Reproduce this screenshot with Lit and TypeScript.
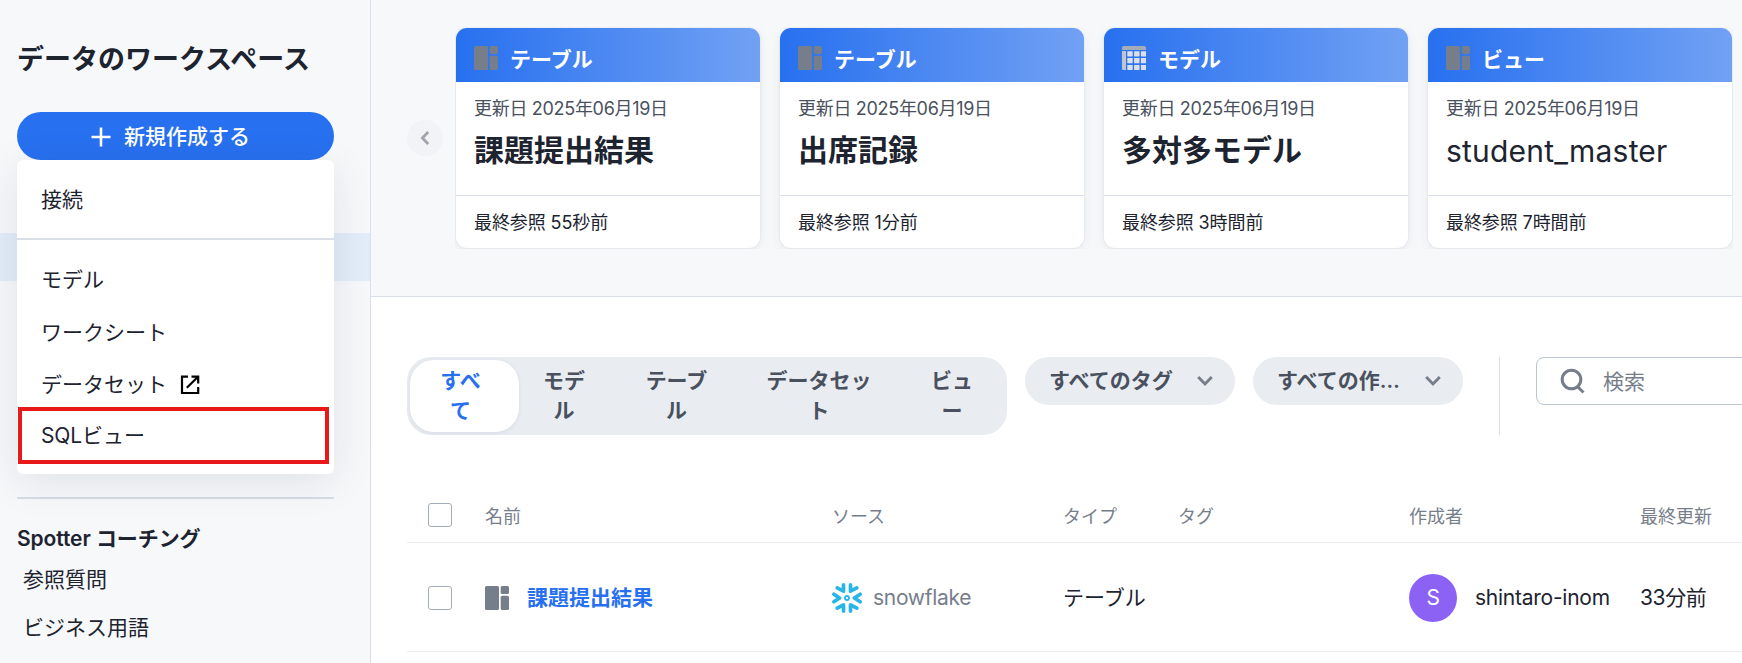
import { LitElement, html, css, svg } from 'lit';
import { customElement, property } from 'lit/decorators.js';
import { classMap } from 'lit/directives/class-map.js';

type IconName = 'plus' | 'external' | 'table' | 'model' | 'chevron-left' | 'chevron-down' | 'search' | 'snowflake';

const icons = {
  plus: { size: 20, body: svg`<path d="M10 .5v19M.5 10h19" stroke="currentColor" stroke-width="2.6" />` },
  external: {
    size: 20,
    body: svg`<g fill="none" stroke="currentColor" stroke-width="2.2">
      <path d="M8 1.6H2V18h16.2v-6M11.5 1.6h6.7v6.9M18 1.8L6.8 12.8" />
    </g>`,
  },
  table: {
    size: 24,
    body: svg`<g fill="#777e8b">
      <rect width="14" height="24" rx="1.5" />
      <rect x="15.7" width="8.3" height="8" rx="1.5" />
      <rect x="15.7" y="9.8" width="8.3" height="14.2" rx="1.5" />
    </g>`,
  },
  model: {
    size: 24,
    body: svg`
      <path d="M1.5 0h21A1.5 1.5 0 0 1 24 1.5V4H0V1.5A1.5 1.5 0 0 1 1.5 0z" fill="#a5acb9" />
      <path d="M0 5h4v19H1.5A1.5 1.5 0 0 1 0 22.5z" fill="#c0c6cf" />
      <g fill="#dbdfe7">
        ${[5.3, 12.1, 18.9].map(x => [5.3, 12.1, 18.9].map(y => svg`
          <rect x=${x} y=${y} width="5.4" height="5.1" rx="0.4" />
        `))}
      </g>`,
  },
  'chevron-left': {
    size: 14,
    body: svg`<path d="M10.2 1L4.4 7l5.8 6" fill="none" stroke="currentColor" stroke-width="2.8" />`,
  },
  'chevron-down': {
    size: 16,
    body: svg`<path d="M1.2 4L8 11l6.8-7" fill="none" stroke="currentColor" stroke-width="2.9" />`,
  },
  search: {
    size: 26,
    body: svg`<g fill="none" stroke="currentColor" stroke-width="3">
      <circle cx="11.5" cy="11.5" r="9.3" />
      <path d="M17.7 18.7l5.8 5.8" />
    </g>`,
  },
  snowflake: {
    size: 30,
    body: svg`<g fill="none" stroke="#29b5e8" stroke-width="3.7" stroke-linecap="round" stroke-linejoin="round">
      <path d="M11.5 1.9v6.3L5.2 4.9M18.5 1.9v6.3l6.3-3.3" />
      <path d="M11.5 28.1v-6.3l-6.3 3.3M18.5 28.1v-6.3l6.3 3.3" />
      <path d="M1.9 11.3L7.6 15l-5.7 3.7M28.1 11.3L22.4 15l5.7 3.7" />
      <circle cx="15" cy="15" r="2" stroke-width="1.8" />
    </g>`,
  },
};

@customElement('ws-icon')
export class WsIcon extends LitElement {
  static styles = css`
    :host {
      display: inline-flex;
      flex: none;
    }

    svg {
      display: block;
    }
  `;

  @property({ type: String })
  name: IconName = 'plus';

  render() {
    const { size, body } = icons[this.name];
    return html`<svg width=${size} height=${size} viewBox="0 0 ${size} ${size}" aria-hidden="true">${body}</svg>`;
  }
}

@customElement('ws-card')
export class WsCard extends LitElement {
  static styles = css`
    :host {
      display: flex;
      flex-direction: column;
      flex: none;
      width: 304px;
      height: 220px;
      border-radius: 11px;
      overflow: hidden;
      background: #fff;
      box-shadow: 0 0 2px rgba(25, 35, 49, 0.1), 0 3px 12px rgba(25, 35, 49, 0.07);
    }

    header {
      display: flex;
      align-items: center;
      gap: 12px;
      height: 54px;
      padding: 0 18px;
      box-sizing: border-box;
      background: linear-gradient(90deg, #2770ef, #71a1f4);
      color: #fff;
      font-weight: 700;
      line-height: 30px;
    }

    ws-icon {
      padding-top: 6px;
    }

    header span {
      padding-top: 10px;
    }

    .body {
      flex: 1;
      padding: 13px 18px 0;
    }

    .date {
      color: #4a515e;
      font-size: 18px;
      line-height: 28px;
      letter-spacing: -0.3px;
    }

    .name {
      margin-top: 5px;
      font-size: 30px;
      font-weight: 700;
      line-height: 45px;
    }

    .name.latin {
      padding-top: 1px;
      font-weight: 400;
      letter-spacing: 0.2px;
    }

    footer {
      box-sizing: border-box;
      height: 53px;
      padding: 1px 18px 0;
      border-top: 1px solid #d9dee8;
      font-size: 18px;
      line-height: 52px;
      letter-spacing: -0.1px;
    }
  `;

  @property({ type: String }) kind = '';
  @property({ type: String }) icon: IconName = 'table';
  @property({ type: String }) name = '';
  @property({ type: String }) viewed = '';

  render() {
    const latin = /^[\x20-\x7e]+$/.test(this.name);
    return html`
      <header><ws-icon name=${this.icon}></ws-icon><span>${this.kind}</span></header>
      <div class="body">
        <div class="date">更新日 2025年06月19日</div>
        <div class=${classMap({ name: true, latin })}>${this.name}</div>
      </div>
      <footer>最終参照 ${this.viewed}</footer>
    `;
  }
}

const cards: { kind: string; icon: IconName; name: string; viewed: string }[] = [
  { kind: 'テーブル', icon: 'table', name: '課題提出結果', viewed: '55秒前' },
  { kind: 'テーブル', icon: 'table', name: '出席記録', viewed: '1分前' },
  { kind: 'モデル', icon: 'model', name: '多対多モデル', viewed: '3時間前' },
  { kind: 'ビュー', icon: 'table', name: 'student_master', viewed: '7時間前' },
];

const tabs = [
  ['すべ', 'て'],
  ['モデ', 'ル'],
  ['テーブ', 'ル'],
  ['データセッ', 'ト'],
  ['ビュ', 'ー'],
];

@customElement('app-root')
export class AppRoot extends LitElement {
  static styles = css`
    :host {
      display: flex;
      width: 1742px;
      height: 663px;
      overflow: hidden;
      background: #fff;
      color: #1d232f;
      font-family: Inter, 'Noto Sans CJK JP', sans-serif;
      font-size: 21px;
      line-height: 30px;
      white-space: nowrap;
    }

    /* Sidebar */
    aside {
      flex: none;
      position: relative;
      display: flex;
      flex-direction: column;
      width: 370px;
      border-right: 1px solid #d9dee8;
      background: #f6f8fa;
      overflow: hidden;
    }

    h1 {
      margin: 40px 17px 32px;
      font-size: 27px;
      font-weight: 700;
      line-height: 40px;
    }

    .create {
      display: flex;
      align-items: center;
      justify-content: center;
      gap: 13px;
      width: 317px;
      height: 48px;
      margin-left: 17px;
      padding: 1px 10px 0 0;
      border: 0;
      border-radius: 24px;
      background: #2770ef;
      color: #fff;
      font: inherit;
      font-weight: 500;
    }

    .selected {
      height: 48px;
      margin-top: 73px;
      background: #e3ecf9;
    }

    .rule {
      height: 2px;
      margin: 216px 36px 0 17px;
      background: #d6dce6;
    }

    h2 {
      margin: 25px 17px 0;
      font-size: 21px;
      font-weight: 600;
      line-height: 30px;
      letter-spacing: -0.08px;
    }

    .link {
      margin: 11px 23px 0;
      font-weight: 400;
      line-height: 30px;
    }

    .link + .link {
      margin-top: 18px;
    }

    .menu {
      position: absolute;
      top: 160px;
      left: 17px;
      width: 317px;
      height: 314px;
      border-radius: 6px;
      background: #fff;
      box-shadow: 0 8px 40px rgba(25, 35, 49, 0.1);
    }

    .menu div {
      display: flex;
      align-items: center;
      box-sizing: border-box;
      height: 52px;
      padding-left: 24px;
    }

    .menu .first {
      height: 80px;
      padding-top: 1px;
      border-bottom: 2px solid #d9dee8;
    }

    .menu .model {
      height: 54px;
      margin-top: 13px;
    }

    .menu ws-icon {
      margin-left: 13px;
      color: #000;
    }

    .menu .boxed {
      width: 311px;
      height: 57px;
      margin: -4px 0 0 1px;
      padding-left: 19px;
      border: 4px solid #e81919;
      letter-spacing: -0.1px;
    }

    /* Recent items */
    main {
      flex: 1;
      min-width: 0;
    }

    .recent {
      display: flex;
      align-items: center;
      box-sizing: border-box;
      height: 297px;
      padding: 0 0 20px 36px;
      border-bottom: 1px solid #d9dee8;
      background: #f6f8fa;
    }

    .prev {
      display: flex;
      flex: none;
      align-items: center;
      justify-content: center;
      width: 36px;
      height: 36px;
      border-radius: 50%;
      background: #f1f3f6;
      color: #a1a5ad;
    }

    .cards {
      display: flex;
      gap: 20px;
      margin-left: 12px;
      padding: 1px;
      overflow: hidden;
    }

    /* Filters */
    .filters {
      display: flex;
      align-items: flex-start;
      margin: 60px 0 0 36px;
    }

    .tabs {
      display: grid;
      flex: none;
      grid-template-columns: 109px 90px 135px 150px 110px;
      padding: 3px;
      border-radius: 24px;
      background: #e9ecf1;
      color: #4a515e;
      font-weight: 600;
      text-align: center;
    }

    .tab {
      padding: 6px 0;
      border-radius: 24px;
    }

    .tab:last-child {
      padding-left: 6px;
    }

    .tab.active {
      padding-right: 8px;
      background: #fff;
      color: #2770ef;
      box-shadow: 0 1px 5px rgba(25, 35, 49, 0.08);
    }

    .chip {
      display: flex;
      flex: none;
      align-items: center;
      justify-content: space-between;
      box-sizing: border-box;
      width: 210px;
      height: 48px;
      margin-left: 18px;
      padding: 0 22px 0 24px;
      border-radius: 24px;
      background: #e9ecf1;
      color: #4a515e;
      font-weight: 600;
    }

    .chip ws-icon {
      color: #777e8b;
    }

    .separator {
      flex: none;
      width: 1px;
      height: 78px;
      margin: 0 36px;
      background: #d9dee8;
    }

    .search {
      display: flex;
      flex: none;
      align-items: center;
      gap: 17px;
      box-sizing: border-box;
      width: 300px;
      height: 48px;
      padding: 1px 0 0 23px;
      border: 1px solid #bcc5d3;
      border-radius: 8px;
      color: #777e8b;
    }

    .search ws-icon {
      padding-bottom: 2px;
    }

    /* Table */
    .row {
      display: grid;
      grid-template-columns: 78px 347px 231px 115px 231px 231px 1fr;
      align-items: center;
      box-sizing: border-box;
      height: 109px;
      margin-left: 36px;
      padding-top: 2px;
      border-bottom: 1px solid #e9ecf1;
    }

    .row.head {
      height: 54px;
      margin-top: 54px;
      color: #777e8b;
      font-size: 18px;
    }

    .check {
      box-sizing: border-box;
      width: 24px;
      height: 24px;
      margin-left: 21px;
      border: 1px solid #a5acb9;
      border-radius: 3px;
    }

    .head .check {
      margin-bottom: 4px;
    }

    .cell {
      display: flex;
      align-items: center;
    }

    .title {
      gap: 18px;
      color: #2770ef;
      font-weight: 700;
    }

    .source {
      gap: 11px;
      color: #777e8b;
      letter-spacing: -0.3px;
    }

    .author {
      gap: 18px;
      letter-spacing: -0.25px;
    }

    .updated {
      letter-spacing: -0.4px;
    }

    .avatar {
      display: flex;
      align-items: center;
      justify-content: center;
      width: 48px;
      height: 48px;
      border-radius: 50%;
      background: #8c62f5;
      color: #fff;
    }
  `;

  private renderSidebar() {
    return html`
      <aside>
        <h1>データのワークスペース</h1>
        <button class="create"><ws-icon name="plus"></ws-icon>新規作成する</button>
        <div class="selected"></div>
        <div class="rule"></div>
        <h2>Spotter コーチング</h2>
        <div class="link">参照質問</div>
        <div class="link">ビジネス用語</div>
        <div class="menu" role="menu">
          <div class="first">接続</div>
          <div class="model">モデル</div>
          <div>ワークシート</div>
          <div>データセット<ws-icon name="external"></ws-icon></div>
          <div class="boxed">SQLビュー</div>
        </div>
      </aside>
    `;
  }

  private renderFilters() {
    return html`
      <div class="filters">
        <div class="tabs">
          ${tabs.map(([first, rest], i) => html`
            <div class=${classMap({ tab: true, active: i === 0 })}>${first}<br />${rest}</div>
          `)}
        </div>
        <div class="chip">すべてのタグ<ws-icon name="chevron-down"></ws-icon></div>
        <div class="chip">すべての作…<ws-icon name="chevron-down"></ws-icon></div>
        <div class="separator"></div>
        <div class="search"><ws-icon name="search"></ws-icon>検索</div>
      </div>
    `;
  }

  private renderTable() {
    return html`
      <div class="row head">
        <div class="check"></div>
        <div>名前</div>
        <div>ソース</div>
        <div>タイプ</div>
        <div>タグ</div>
        <div>作成者</div>
        <div>最終更新</div>
      </div>
      <div class="row">
        <div class="check"></div>
        <div class="cell title"><ws-icon name="table"></ws-icon>課題提出結果</div>
        <div class="cell source"><ws-icon name="snowflake"></ws-icon>snowflake</div>
        <div>テーブル</div>
        <div></div>
        <div class="cell author"><span class="avatar">S</span>shintaro-inom</div>
        <div class="updated">33分前</div>
      </div>
    `;
  }

  render() {
    return html`
      ${this.renderSidebar()}
      <main>
        <section class="recent">
          <div class="prev"><ws-icon name="chevron-left"></ws-icon></div>
          <div class="cards">
            ${cards.map(card => html`
              <ws-card kind=${card.kind} icon=${card.icon} name=${card.name} viewed=${card.viewed}></ws-card>
            `)}
          </div>
        </section>
        ${this.renderFilters()}
        ${this.renderTable()}
      </main>
    `;
  }
}

declare global {
  interface HTMLElementTagNameMap {
    'ws-icon': WsIcon;
    'ws-card': WsCard;
    'app-root': AppRoot;
  }
}
